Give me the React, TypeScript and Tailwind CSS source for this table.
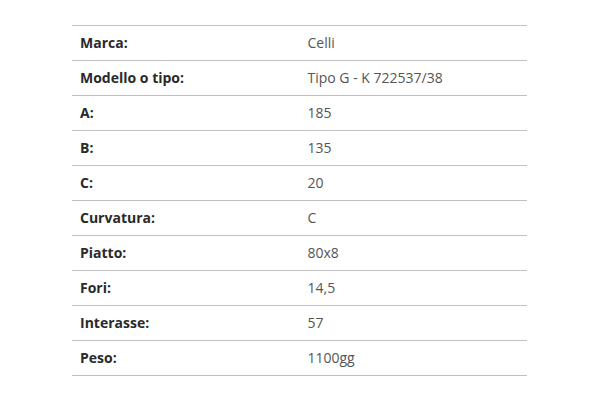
import React from "react";

const rows: [string, string][] = [
  ["Marca:", "Celli"],
  ["Modello o tipo:", "Tipo G - K 722537/38"],
  ["A:", "185"],
  ["B:", "135"],
  ["C:", "20"],
  ["Curvatura:", "C"],
  ["Piatto:", "80x8"],
  ["Fori:", "14,5"],
  ["Interasse:", "57"],
  ["Peso:", "1100gg"],
];

export default function App() {
  return (
    <div className="w-[600px] h-[400px] bg-white pt-[25px] pl-[72px]" style={{ fontFamily: '"Open Sans", sans-serif' }}>
      <div className="w-[455px] border-t border-[#c0c0c0]">
        {rows.map(([k, v]) => (
          <div key={k} className="grid grid-cols-2 h-[35px] pb-[2px] border-b border-[#c0c0c0] items-center text-[14px]">
            <div className="pl-2 font-bold text-[#2a2a2a]">{k}</div>
            <div className="pl-2 text-[#555]">{v}</div>
          </div>
        ))}
      </div>
    </div>
  );
}
